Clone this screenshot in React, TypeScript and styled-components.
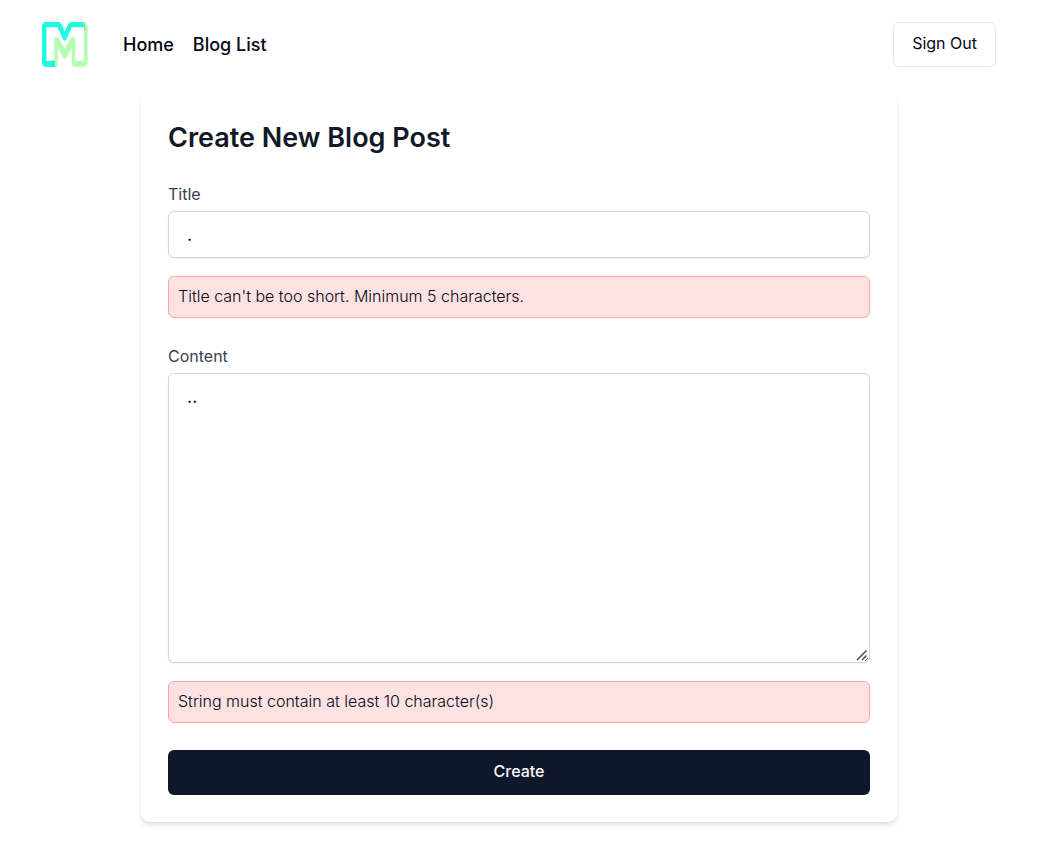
import React from 'react';
import styled, { createGlobalStyle } from 'styled-components';

const GlobalStyle = createGlobalStyle`
  *, *::before, *::after { box-sizing: border-box; }
  body {
    margin: 0;
    background: #ffffff;
    color: #020817;
    font-family: Inter, "Liberation Sans", sans-serif;
    font-size: 16px;
    line-height: 22px;
  }
  input, textarea, button { font: inherit; color: inherit; }
`;

const Header = styled.header`
  display: flex;
  align-items: center;
  padding: 22px 44px 22px 42px;
`;

const LogoLink = styled.a`
  display: block;
  width: 46px;
  height: 45px;
  margin-right: 35px;
  svg { display: block; }
`;

const Nav = styled.nav`
  display: flex;
  gap: 19px;
  flex: 1;
`;

const NavLink = styled.a`
  color: #020817;
  font-size: 18px;
  line-height: 27px;
  font-weight: 500;
  text-decoration: none;
`;

const Button = styled.button<{ $primary?: boolean }>`
  height: 45px;
  padding: 0 18px 3px;
  border-radius: 6px;
  cursor: pointer;
  font-weight: ${(p) => (p.$primary ? 500 : 400)};
  width: ${(p) => (p.$primary ? '100%' : 'auto')};
  color: ${(p) => (p.$primary ? '#f8fafc' : '#020817')};
  background: ${(p) => (p.$primary ? '#0f172a' : '#ffffff')};
  border: ${(p) => (p.$primary ? '0' : '1px solid #e2e8f0')};
`;

const Main = styled.main`
  padding: 4px 2px 27px 0;
`;

const Card = styled.form`
  display: flex;
  flex-direction: column;
  gap: 27px;
  max-width: 756px;
  margin: 0 auto;
  padding: 27px;
  border-radius: 9px;
  background: #ffffff;
  box-shadow: 0 4px 6px -1px rgba(0, 0, 0, 0.1), 0 2px 4px -2px rgba(0, 0, 0, 0.1);
`;

const Heading = styled.h1`
  margin: 0;
  font-size: 27px;
  line-height: 36px;
  font-weight: 600;
  color: #111827;
`;

const Field = styled.div`
  display: flex;
  flex-direction: column;
`;

const Label = styled.label`
  margin-bottom: 6px;
  color: #374151;
`;

const TextInput = styled.input`
  width: 100%;
  height: 47px;
  padding: 9px 18px;
  border: 1px solid #d1d5db;
  border-radius: 6px;
  background: #ffffff;
  box-shadow: 0 1px 2px rgba(0, 0, 0, 0.05);
  font-size: 18px;
`;

const TextAreaWrap = styled.div`
  position: relative;
`;

const TextArea = styled.textarea`
  display: block;
  width: 100%;
  height: 290px;
  padding: 9px 18px;
  border: 1px solid #d1d5db;
  border-radius: 6px;
  background: #ffffff;
  box-shadow: 0 1px 2px rgba(0, 0, 0, 0.05);
  font-size: 18px;
  line-height: 27px;
  resize: vertical;
`;

const ResizeGrip = styled.svg`
  position: absolute;
  right: 2px;
  bottom: 2px;
  pointer-events: none;
`;

const ErrorBox = styled.p`
  margin: 18px 0 0;
  padding: 8px 9px 10px;
  border: 1px solid #fca5a5;
  border-radius: 6px;
  background: #fee2e2;
  font-weight: 300;
`;

function Logo() {
  return (
    <svg width="46" height="45" viewBox="36 36 136 135" preserveAspectRatio="none" aria-hidden="true">
      <path
        fill="#1ffbe2"
        d="M48 36H84Q91 36 94 43L103 65L113 43Q116 36 123 36H158Q164 36 164 52H124L108 88Q103 97 98 88L82 52H49V152H80V171H50Q36 171 36 157V50Q36 36 48 36Z"
      />
      <path
        fill="#b5ffb5"
        d="M158 36Q171 37 171 50V157Q171 171 157 171H137Q124 171 124 158V114L109 142Q103 151 97 142L83 114V158Q83 171 72 171V90Q72 81 79 81Q84 81 87 87L103 116L119 87Q122 81 127 81Q135 81 135 90V152H160V50Q160 41 158 36Z"
      />
      <path fill="#12d9c4" d="M69 152H73V171H69Z" />
      <path fill="#91dc9b" d="M160 40H164V62H160Z" />
    </svg>
  );
}

export default function App() {
  return (
    <>
      <GlobalStyle />
      <Header>
        <LogoLink href="#" aria-label="Main page">
          <Logo />
        </LogoLink>
        <Nav>
          <NavLink href="#">Home</NavLink>
          <NavLink href="#">Blog List</NavLink>
        </Nav>
        <Button type="button">Sign Out</Button>
      </Header>
      <Main>
        <Card noValidate onSubmit={(e) => e.preventDefault()}>
          <Heading>Create New Blog Post</Heading>
          <Field>
            <Label htmlFor="title">Title</Label>
            <TextInput id="title" type="text" defaultValue="." aria-describedby="title-error" />
            <ErrorBox id="title-error">Title can't be too short. Minimum 5 characters.</ErrorBox>
          </Field>
          <Field>
            <Label htmlFor="content">Content</Label>
            <TextAreaWrap>
              <TextArea id="content" defaultValue=".." aria-describedby="content-error" />
              <ResizeGrip width="12" height="12" viewBox="0 0 12 12" aria-hidden="true">
                <path fill="#ffffff" d="M0 0H12V8L8 12H0Z" />
                <path fill="none" stroke="#4d4d4d" strokeWidth="1.5" d="M1 11L10.5 1.5M6 11L10.5 6.5" />
              </ResizeGrip>
            </TextAreaWrap>
            <ErrorBox id="content-error">String must contain at least 10 character(s)</ErrorBox>
          </Field>
          <Button $primary type="submit">Create</Button>
        </Card>
      </Main>
    </>
  );
}
